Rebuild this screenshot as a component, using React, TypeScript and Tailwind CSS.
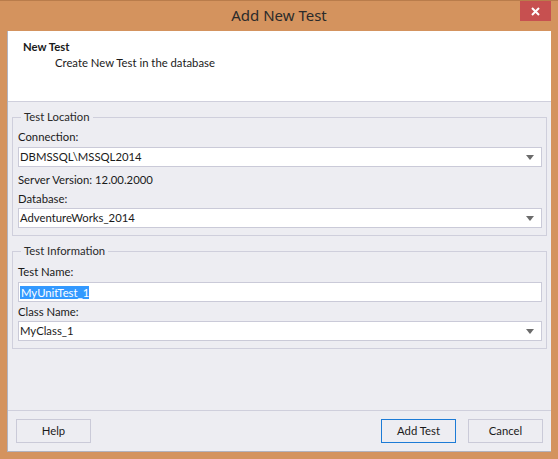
const FONT = "font-['Lato',sans-serif]";
const TITLE = "font-['Noto_Sans',sans-serif]";

function Combo({ value }: { value: string }) {
  return (
    <div className="h-[20px] bg-white border border-[#cacad8] flex items-center pl-[1px] pr-[7px]">
      <span className="flex-1 text-[11.3px] leading-[16px] text-[#1a1a1a]">{value}</span>
      <svg width="8" height="5" viewBox="0 0 8 5">
        <path d="M0 0h8L4 5z" fill="#6b6b6b" />
      </svg>
    </div>
  );
}

function Label({ text, className = '' }: { text: string; className?: string }) {
  return <div className={`text-[11.3px] leading-[16px] text-[#1a1a1a] ${className}`}>{text}</div>;
}

export default function App() {
  return (
    <div className={`w-[558px] h-[459px] bg-[#d4935e] border-t border-[#b97c4b] flex flex-col ${FONT}`}>
      {/* Title bar */}
      <div className="h-[30px] flex relative items-center justify-center">
        <span className={`text-[15px] text-[#2b2b2b] -mt-[1px] ${TITLE}`}>Add New Test</span>
        <div className="absolute right-[7px] top-0 w-[31px] h-[20px] bg-[#c75050] flex items-center justify-center">
          <svg width="9" height="9" viewBox="0 0 9 9">
            <path d="M1 1l7 7M8 1L1 8" stroke="#fff" strokeWidth="2" />
          </svg>
        </div>
      </div>

      <div className="flex-1 mx-[7px] mb-[7px] flex flex-col bg-[#ededf2] border-l border-b border-[#b2b2be]">
        {/* Header */}
        <div className="h-[71px] bg-white border-b border-[#cfcfdc] pt-[8px] pl-[15px]">
          <div className="text-[11.3px] leading-[16px] font-bold text-[#1a1a1a]">New Test</div>
          <div className="text-[11.3px] leading-[16px] text-[#1a1a1a] pl-[32px]">Create New Test in the database</div>
        </div>

        {/* Body */}
        <div className="flex-1 pl-[4px] pr-[4px] pt-[7px]">
          <fieldset className="border border-[#cfcfdc] pl-[5px] pr-[4px] pb-[7px] min-w-0">
            <legend className="ml-[3px] px-[3px] text-[11.3px] leading-[16px] text-[#2a2a2a]">Test Location</legend>
            <Label text="Connection:" className="mt-[4px]" />
            <div className="mt-[2px]">
              <Combo value="DBMSSQL\MSSQL2014" />
            </div>
            <Label text="Server Version: 12.00.2000" className="mt-[5px]" />
            <Label text="Database:" className="mt-[3px]" />
            <div className="mt-[1px]">
              <Combo value="AdventureWorks_2014" />
            </div>
          </fieldset>

          <fieldset className="mt-[7px] border border-[#cfcfdc] pl-[5px] pr-[4px] pb-[7px] min-w-0">
            <legend className="ml-[3px] px-[3px] text-[11.3px] leading-[16px] text-[#2a2a2a]">Test Information</legend>
            <Label text="Test Name:" className="mt-[5px]" />
            <div className="mt-[2px] h-[20px] bg-white border border-[#cacad8] flex items-center pl-[1px]">
              <span className="bg-[#3399ff] text-white text-[11.3px] leading-[13px] pl-[1px]">MyUnitTest_1</span>
            </div>
            <Label text="Class Name:" className="mt-[2px]" />
            <div className="mt-[1px]">
              <Combo value="MyClass_1" />
            </div>
          </fieldset>
        </div>

        {/* Footer */}
        <div className="border-t border-[#cfcfdc] h-[41px] px-[8px] pt-[8px] flex items-start">
          <button className="w-[75px] h-[24px] border border-[#cacad8] bg-[#ededf2] text-[11.3px] text-[#1a1a1a]">Help</button>
          <div className="flex-1" />
          <button className="w-[75px] h-[24px] border border-[#1c7bd6] bg-[#ededf2] text-[11.3px] text-[#1a1a1a]">Add Test</button>
          <button className="ml-[12px] w-[75px] h-[24px] border border-[#cacad8] bg-[#ededf2] text-[11.3px] text-[#1a1a1a]">Cancel</button>
        </div>
      </div>
    </div>
  );
}
